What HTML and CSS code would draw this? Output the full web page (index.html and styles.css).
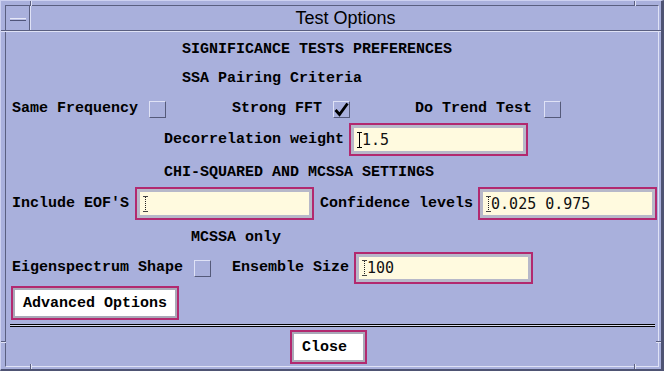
FILE: index.html
```html
<!DOCTYPE html>
<html lang="en">
<head>
    <title>Test Options</title>
    <link rel="stylesheet" href="styles.css">
</head>
<body>

    <div class="window">

        <!-- resize corner marks on the frame -->
        <span class="tick tick-v" style="left: 29px; top: 0;"></span>
        <span class="tick tick-v" style="left: 633px; top: 0;"></span>
        <span class="tick tick-v" style="left: 29px; bottom: 0;"></span>
        <span class="tick tick-v" style="left: 633px; bottom: 0;"></span>
        <span class="tick tick-h" style="top: 29px; left: 0;"></span>
        <span class="tick tick-h" style="top: 340px; left: 0;"></span>
        <span class="tick tick-h" style="top: 29px; right: 0;"></span>
        <span class="tick tick-h" style="top: 340px; right: 0;"></span>

        <div class="inner">

            <div class="titlebar">
                <div class="menubox"><span class="menubar"></span></div>
                <div class="title">Test Options</div>
            </div>

            <div class="content">

                <div class="heading h-first">SIGNIFICANCE TESTS PREFERENCES</div>
                <div class="heading h-ssa">SSA Pairing Criteria</div>

                <div class="row row-checks">
                    <span class="label col-a">Same Frequency</span>
                    <span class="check chk-same"></span>
                    <span class="label lbl-fft">Strong FFT</span>
                    <span class="check chk-fft">
                        <svg width="15" height="15" viewBox="0 0 15 15">
                            <path d="M1.5 8 L5.5 12.5 L13.5 1.5" fill="none" stroke="#000" stroke-width="2.8" stroke-linejoin="miter"/>
                        </svg>
                    </span>
                    <span class="label lbl-trend">Do Trend Test</span>
                    <span class="check chk-trend"></span>
                </div>

                <div class="row row-field row-decor">
                    <span class="label">Decorrelation weight</span>
                    <div class="field"><span class="ibeam"></span>1.5</div>
                </div>

                <div class="heading h-chi">CHI-SQUARED AND MCSSA SETTINGS</div>

                <div class="row row-field row-eof">
                    <span class="label col-a">Include EOF'S</span>
                    <div class="field field-eof"><span class="ibeam dotted"></span></div>
                    <span class="label col-conf">Confidence levels</span>
                    <div class="field field-conf"><span class="ibeam dotted"></span>0.025 0.975</div>
                </div>

                <div class="heading h-mcssa">MCSSA only</div>

                <div class="row row-field row-eigen">
                    <span class="label col-a">Eigenspectrum Shape</span>
                    <span class="check chk-eigen"></span>
                    <span class="label lbl-ens">Ensemble Size</span>
                    <div class="field field-ens"><span class="ibeam dotted"></span>100</div>
                </div>

                <div class="row row-adv">
                    <button class="btn btn-adv">Advanced Options</button>
                </div>

                <div class="separator"></div>

                <div class="row row-close">
                    <button class="btn btn-close">Close</button>
                </div>

            </div>
        </div>
    </div>

</body>
</html>
```

FILE: styles.css
```css
* {
    margin: 0;
    padding: 0;
    box-sizing: border-box;
}

body {
    background: #a9b0dc;
    font-family: 'Liberation Mono', 'DejaVu Sans Mono', monospace;
}

.window {
    position: relative;
    width: 664px;
    height: 371px;
    background: #a9b0dc;
    border-top: 1px solid #cdd1f0;
    border-left: 1px solid #cdd1f0;
    border-right: 3px solid #4e5373;
    border-bottom: 2px solid #4e5373;
    padding: 4px 2px 2px 4px;
}

.tick {
    position: absolute;
    background: #5a5f80;
}

.tick-v {
    width: 2px;
    height: 5px;
    border-right: 1px solid #dfe2f6;
}

.tick-h {
    width: 5px;
    height: 2px;
    border-bottom: 1px solid #dfe2f6;
}

.inner {
    height: 100%;
    border: 1px solid #5a5f80;
    border-right-color: #dfe2f6;
    border-bottom-color: #dfe2f6;
}

/* title bar */

.titlebar {
    display: flex;
    height: 25px;
    border-bottom: 1px solid #5a5f80;
    box-shadow: 0 1px 0 #dfe2f6;
}

.menubox {
    width: 24px;
    border-right: 1px solid #5a5f80;
    box-shadow: 1px 0 0 #dfe2f6;
    display: flex;
    align-items: center;
    padding-left: 4px;
}

.menubar {
    display: block;
    width: 16px;
    height: 3px;
    background: #b8bde2;
    border-top: 1px solid #e6e8f8;
    border-bottom: 1px solid #50557a;
    margin-top: 2px;
}

.title {
    flex: 1;
    text-align: center;
    font-family: 'Liberation Sans', Arial, sans-serif;
    font-size: 18px;
    line-height: 24px;
    color: #000;
    padding-left: 3px;
}

/* body */

.content {
    display: flex;
    flex-direction: column;
    padding-top: 1px;
}

.heading,
.label {
    font-weight: bold;
    font-size: 15px;
    line-height: 20px;
    color: #000;
    white-space: pre;
}

.heading {
    height: 20px;
}

.h-first { margin-top: 8px; padding-left: 176px; }
.h-ssa { margin-top: 9px; padding-left: 176px; }
.h-chi { margin-top: 7px; padding-left: 158px; }
.h-mcssa { margin-top: 8px; padding-left: 185px; }

.row {
    display: flex;
    align-items: center;
}

.row-checks {
    margin-top: 10px;
    height: 20px;
}

.row-field {
    height: 33px;
}

.row-decor {
    margin-top: 4px;
    padding-left: 158px;
}

.row-eof { margin-top: 4px; }
.row-eigen { margin-top: 4px; height: 32px; }

.col-a { margin-left: 6px; }

.chk-same { margin-left: 11px; }
.lbl-fft { margin-left: 66px; }
.chk-fft { margin-left: 11px; }
.lbl-trend { margin-left: 65px; }
.chk-trend { margin-left: 12px; }

.check {
    display: flex;
    align-items: center;
    justify-content: center;
    width: 17px;
    height: 17px;
    border: 1px solid #dfe2f6;
    border-right-color: #555a7a;
    border-bottom-color: #555a7a;
}

.check svg {
    display: block;
}

/* text fields */

.field {
    display: flex;
    align-items: center;
    width: 179px;
    height: 33px;
    border: 2px solid #b2296f;
    box-shadow: inset 0 0 0 3px #b7b8c9;
    background: #fffadf;
    padding-left: 6px;
    font-family: 'DejaVu Sans Mono', monospace;
    font-size: 15px;
    color: #111;
}

.row-decor .field { margin-left: 5px; }
.field-eof { margin-left: 6px; }
.col-conf { margin-left: 6px; }
.field-conf { margin-left: 5px; }

.chk-eigen { margin-left: 11px; }
.lbl-ens { margin-left: 21px; }
.field-ens { margin-left: 5px; height: 32px; }

.ibeam {
    display: block;
    width: 5px;
    height: 16px;
    margin-right: 0;
    border-top: 1px solid #000;
    border-bottom: 1px solid #000;
    background: linear-gradient(to right, transparent 2px, #000 2px, #000 3px, transparent 3px);
}

.ibeam.dotted {
    border-top-color: #444;
    border-bottom-color: #444;
    background:
        linear-gradient(to right, #fffadf 2px, transparent 2px, transparent 3px, #fffadf 3px),
        repeating-linear-gradient(to bottom, #222 0, #222 1px, transparent 1px, transparent 2px);
}

/* buttons */

.btn {
    font-family: 'Liberation Mono', 'DejaVu Sans Mono', monospace;
    font-weight: bold;
    font-size: 15px;
    color: #000;
    background: #fff;
    border: 2px solid #b2296f;
    box-shadow: inset 0 0 0 2px #a9a9b8;
    height: 34px;
    text-align: left;
}

.row-adv {
    margin-top: 2px;
    height: 34px;
}

.btn-adv {
    width: 168px;
    margin-left: 5px;
    padding-left: 10px;
}

.separator {
    margin: 4px 3px 0 4px;
    height: 3px;
    border-top: 1px solid #000;
    border-bottom: 1px solid #000;
    background: #d4d7ee;
}

.row-close {
    margin-top: 3px;
    height: 34px;
    justify-content: center;
}

.btn-close {
    width: 77px;
    margin-right: 7px;
    padding-left: 10px;
}
```
